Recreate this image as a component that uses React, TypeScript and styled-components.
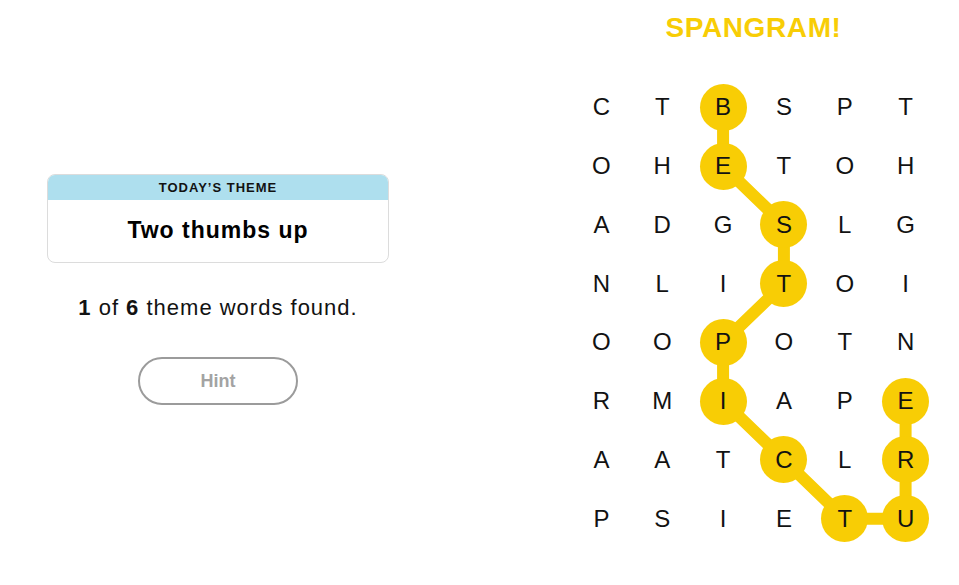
import React from "react";
import styled, { createGlobalStyle } from "styled-components";

const GlobalStyle = createGlobalStyle`
  html, body { margin: 0; padding: 0; background: #ffffff; }
  body { font-family: "Liberation Sans", Arial, sans-serif; color: #000; }
`;

const YELLOW = "#f8cd05";

const Page = styled.div`
  display: flex;
  flex-direction: row;
  width: 959px;
  height: 585px;
  overflow: hidden;
`;

const LeftColumn = styled.section`
  width: 436px;
  padding-top: 174px;
  display: flex;
  flex-direction: column;
  align-items: center;
  box-sizing: border-box;
`;

const ThemeCard = styled.div`
  width: 342px;
  height: 89px;
  box-sizing: border-box;
  border: 1px solid #dcdcdc;
  border-radius: 8px;
  overflow: hidden;
  display: flex;
  flex-direction: column;
`;

const ThemeHeader = styled.div`
  height: 25px;
  background: #aedfee;
  display: flex;
  align-items: center;
  justify-content: center;
  font-size: 13px;
  font-weight: 700;
  letter-spacing: 1px;
  color: #121212;
`;

const ThemeBody = styled.div`
  flex: 1;
  display: flex;
  align-items: center;
  justify-content: center;
  font-size: 23px;
  font-weight: 700;
  letter-spacing: 1px;
  padding-bottom: 2px;
`;

const Progress = styled.p`
  margin: 32px 0 0;
  font-size: 22px;
  letter-spacing: 1px;
  color: #121212;
  line-height: 26px;
  b { font-weight: 700; }
`;

const HintButton = styled.button`
  margin-top: 36px;
  width: 160px;
  height: 48px;
  border-radius: 24px;
  border: 2px solid #9b9b9b;
  background: #fff;
  color: #a3a3a3;
  font-family: "Liberation Sans", Arial, sans-serif;
  font-size: 18px;
  font-weight: 700;
  cursor: default;
`;

const RightColumn = styled.section`
  margin-left: 135px;
  width: 365px;
  display: flex;
  flex-direction: column;
  align-items: center;
`;

const Title = styled.h1`
  margin: 14px 0 0;
  height: 28px;
  line-height: 28px;
  font-size: 28px;
  font-weight: 700;
  color: ${YELLOW};
  letter-spacing: 0.6px;
`;

const Board = styled.div`
  position: relative;
  margin-top: 36px;
  width: 365px;
  height: 470px;
`;

const Connectors = styled.svg`
  position: absolute;
  inset: 0;
  width: 100%;
  height: 100%;
  z-index: 0;
`;

const Grid = styled.div`
  position: relative;
  z-index: 1;
  width: 100%;
  height: 100%;
  display: grid;
  grid-template-columns: repeat(6, 1fr);
  grid-template-rows: repeat(8, 1fr);
`;

const Cell = styled.div`
  display: flex;
  align-items: center;
  justify-content: center;
`;

const Letter = styled.span<{ $found: boolean }>`
  width: 47px;
  height: 47px;
  border-radius: 50%;
  display: flex;
  align-items: center;
  justify-content: center;
  font-size: 24px;
  color: #121212;
  background: ${(p) => (p.$found ? YELLOW : "transparent")};
`;

const letters = [
  "CTBSPT",
  "OHETOH",
  "ADGSLG",
  "NLITOI",
  "OOPOTN",
  "RMIAPE",
  "AATCLR",
  "PSIETU",
];

const path: [number, number][] = [
  [0, 2],
  [1, 2],
  [2, 3],
  [3, 3],
  [4, 2],
  [5, 2],
  [6, 3],
  [7, 4],
  [7, 5],
  [6, 5],
  [5, 5],
];

const CW = 365 / 6;
const RH = 470 / 8;

export default function App() {
  const found = new Set(path.map(([r, c]) => `${r}-${c}`));
  const points = path
    .map(([r, c]) => `${(c + 0.5) * CW},${(r + 0.5) * RH}`)
    .join(" ");
  return (
    <>
      <GlobalStyle />
      <Page>
        <LeftColumn>
          <ThemeCard>
            <ThemeHeader>TODAY’S THEME</ThemeHeader>
            <ThemeBody>Two thumbs up</ThemeBody>
          </ThemeCard>
          <Progress>
            <b>1</b> of <b>6</b> theme words found.
          </Progress>
          <HintButton>Hint</HintButton>
        </LeftColumn>
        <RightColumn>
          <Title>SPANGRAM!</Title>
          <Board>
            <Connectors viewBox="0 0 365 470">
              <polyline
                points={points}
                fill="none"
                stroke={YELLOW}
                strokeWidth={12}
                strokeLinejoin="round"
              />
            </Connectors>
            <Grid>
              {letters.map((row, r) =>
                row.split("").map((ch, c) => (
                  <Cell key={`${r}-${c}`}>
                    <Letter $found={found.has(`${r}-${c}`)}>{ch}</Letter>
                  </Cell>
                ))
              )}
            </Grid>
          </Board>
        </RightColumn>
      </Page>
    </>
  );
}
